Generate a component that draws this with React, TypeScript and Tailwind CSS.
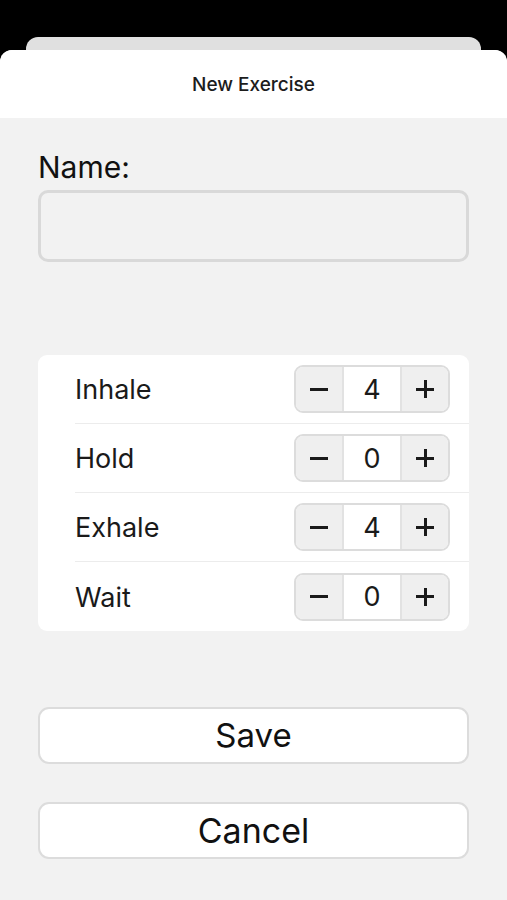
const font = { fontFamily: '"Inter", "Liberation Sans", sans-serif' };

const rows = [
  { label: "Inhale", value: 4 },
  { label: "Hold", value: 0 },
  { label: "Exhale", value: 4 },
  { label: "Wait", value: 0 },
];

function Stepper({ value }: { value: number }) {
  return (
    <div className="flex h-[48px] w-[156px] overflow-hidden rounded-[9px] border-2 border-[#dcdcdc] text-[27px] text-[#1a1a1a]">
      <div className="flex w-[46px] items-center justify-center bg-[#efefef]">
        <span className="block h-[3px] w-[18px] bg-[#1a1a1a]" />
      </div>
      <div className="flex flex-1 items-center justify-center border-x-2 border-[#e2e2e2] bg-white pt-[2px]">
        {value}
      </div>
      <div className="relative flex w-[46px] items-center justify-center bg-[#efefef]">
        <span className="block h-[3px] w-[18px] bg-[#1a1a1a]" />
        <span className="absolute h-[18px] w-[3px] bg-[#1a1a1a]" />
      </div>
    </div>
  );
}

export default function App() {
  return (
    <div className="h-[900px] w-[507px] overflow-hidden bg-black" style={font}>
      <div className="mx-[26px] mt-[37px] h-[20px] rounded-t-[12px] bg-[#e0e0e0]" />
      <div className="-mt-[7px] flex h-[850px] flex-col overflow-hidden rounded-t-[12px] bg-[#f2f2f2]">
        <div className="flex h-[68px] shrink-0 items-center justify-center bg-white pt-[2px] text-[19px] font-medium text-[#1c1c1c]">
          New Exercise
        </div>

        <div className="px-[38px]">
          <div className="mt-[31px] text-[30px] leading-[36px] text-[#111]">Name:</div>
          <div className="mt-[5px] h-[72px] rounded-[10px] border-[3px] border-[#d9d9d9] bg-[#f2f2f2]" />

          <div className="mt-[93px] rounded-[9px] bg-white">
            {rows.map((r, i) => (
              <div key={r.label} className="pl-[37px]">
                <div
                  className={`flex h-[69px] items-center justify-between pr-[19px] ${
                    i < rows.length - 1 ? "border-b border-[#ececec]" : ""
                  }`}
                >
                  <span className="pt-[3px] text-[27px] text-[#1a1a1a]">{r.label}</span>
                  <Stepper value={r.value} />
                </div>
              </div>
            ))}
          </div>

          <button className="mt-[76px] flex h-[57px] w-full items-center justify-center rounded-[11px] border-2 border-[#dcdcdc] bg-white text-[33px] text-[#111]">
            Save
          </button>
          <button className="mt-[38px] flex h-[57px] w-full items-center justify-center rounded-[11px] border-2 border-[#dcdcdc] bg-white text-[34px] text-[#111]">
            Cancel
          </button>
        </div>
      </div>
    </div>
  );
}
